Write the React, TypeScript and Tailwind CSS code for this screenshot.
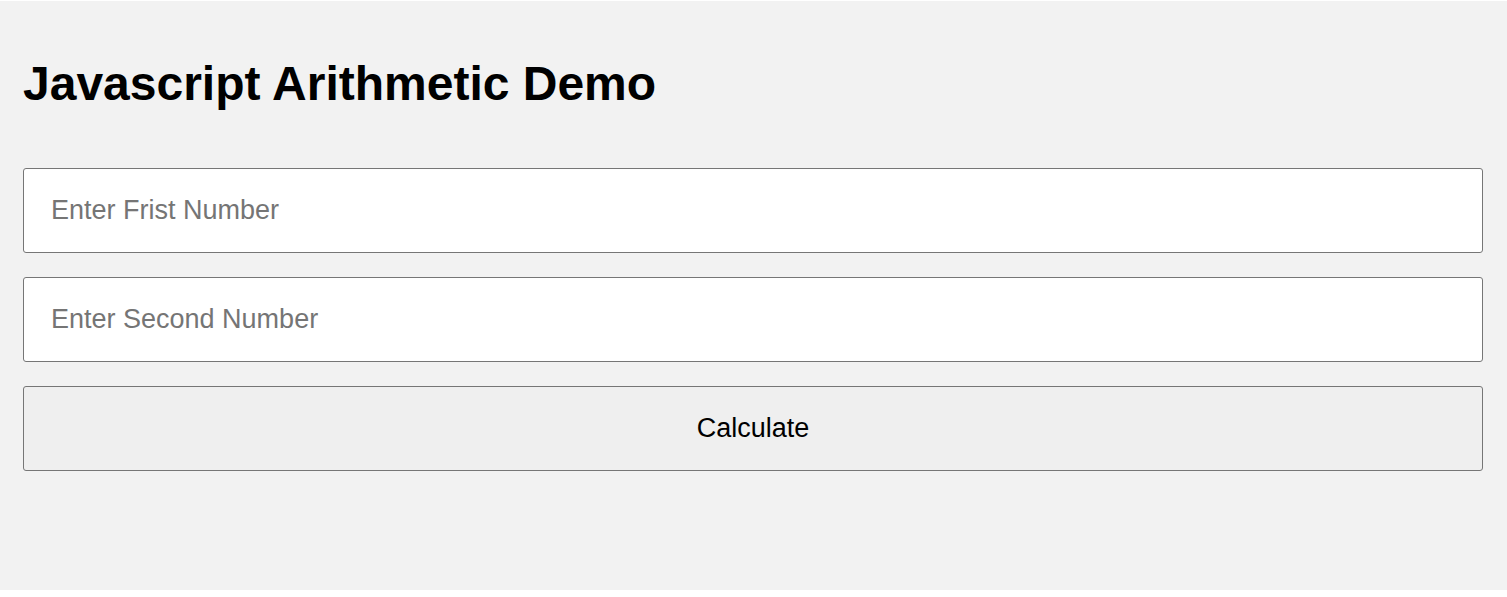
import { useState } from "react";

export default function App() {
  const [first, setFirst] = useState("");
  const [second, setSecond] = useState("");

  return (
    <div className="bg-white w-full h-[597px] pt-px" style={{ fontFamily: '"Liberation Sans", Arial, sans-serif' }}>
      <div className="h-[589px] bg-[#f2f2f2] pl-[23px] pr-[24px] pt-[55px]">
        <h1 className="text-[48px] leading-[55px] font-bold text-black mb-[57px]">
          Javascript Arithmetic Demo
        </h1>

        <div className="flex flex-col gap-6">
          <input
            type="text"
            value={first}
            onChange={(e) => setFirst(e.target.value)}
            placeholder="Enter Frist Number"
            className="h-[85px] w-full bg-white border border-[#767676] rounded-[3px] px-[27px] text-[27px] text-black placeholder:text-[#757575] outline-none"
          />
          <input
            type="text"
            value={second}
            onChange={(e) => setSecond(e.target.value)}
            placeholder="Enter Second Number"
            className="h-[85px] w-full bg-white border border-[#767676] rounded-[3px] px-[27px] text-[27px] text-black placeholder:text-[#757575] outline-none"
          />
          <button
            type="button"
            className="h-[85px] w-full bg-[#efefef] border border-[#767676] rounded-[3px] text-[27px] text-black"
          >
            Calculate
          </button>
        </div>
      </div>
    </div>
  );
}
